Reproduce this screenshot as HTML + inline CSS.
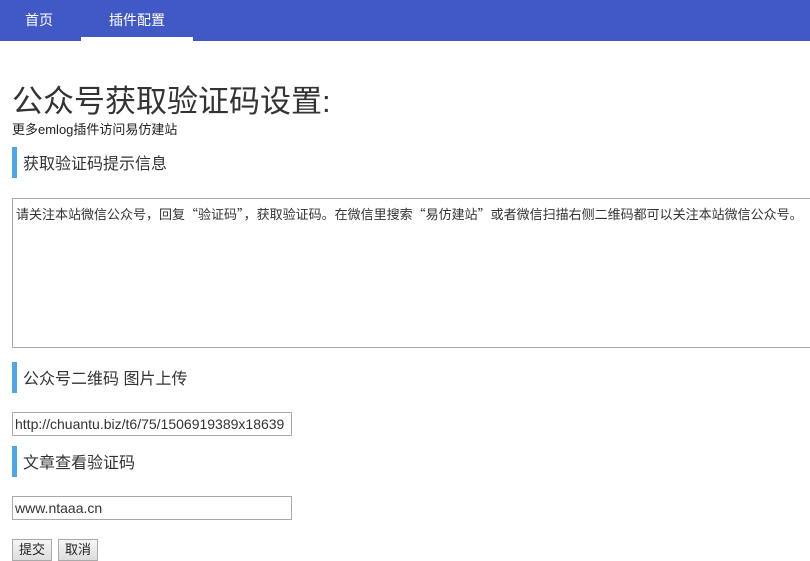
<!DOCTYPE html>
<html><head><meta charset="utf-8"><style>
*{box-sizing:border-box;margin:0;padding:0}
body{width:810px;height:559px;overflow:hidden;background:#fff;font-family:"Liberation Sans","Noto Sans CJK SC",sans-serif;color:#333;position:relative}
.nav{position:absolute;left:0;top:0;width:810px;height:41px;background:#4159c4}
.nav span{position:absolute;top:10px;color:#fff;font-size:14px}
.ul{position:absolute;left:81px;top:37px;width:112px;height:4px;background:#fff}
.a{position:absolute}
h1{position:absolute;left:12px;top:76px;font-size:31px;font-weight:normal;color:#333;white-space:nowrap}
.sub{left:12px;top:119px;font-size:13px;color:#222}
.h{position:absolute;left:12px;width:300px;height:31px;border-left:5px solid #4ea6e6;padding-left:6px;font-size:16px;line-height:36px;color:#333}
.ta{left:12px;top:198px;width:820px;height:150px;border:1px solid #aaa;font-size:13px;padding:5px 3px;color:#333;white-space:nowrap;overflow:hidden}
.q{font-family:"Noto Sans CJK SC",sans-serif}
.in{left:12px;width:280px;height:24px;border:1px solid #aaa;font-size:14px;line-height:22px;padding-left:2px;color:#333;white-space:nowrap;overflow:hidden}
.btn{top:539px;height:22px;border:1px solid #aaa;background:linear-gradient(#f5f5f5,#ddd);font-size:13px;line-height:20px;padding:0 6px;color:#222}
</style></head><body>
<div class="nav"><span style="left:25px">首页</span><span style="left:109px">插件配置</span><div class="ul"></div></div>
<h1>公众号获取验证码设置:</h1>
<div class="a sub">更多emlog插件访问易仿建站</div>
<div class="h" style="top:147px">获取验证码提示信息</div>
<div class="a ta">请关注本站微信公众号，回复<span class="q">“</span>验证码<span class="q">”</span>，获取验证码。在微信里搜索<span class="q">“</span>易仿建站<span class="q">”</span>或者微信扫描右侧二维码都可以关注本站微信公众号。</div>
<div class="h" style="top:362px">公众号二维码 图片上传</div>
<div class="a in" style="top:412px">http://chuantu.biz/t6/75/1506919389x18639</div>
<div class="h" style="top:446px">文章查看验证码</div>
<div class="a in" style="top:496px">www.ntaaa.cn</div>
<div class="a btn" style="left:12px">提交</div>
<div class="a btn" style="left:58px">取消</div>
</body></html>
